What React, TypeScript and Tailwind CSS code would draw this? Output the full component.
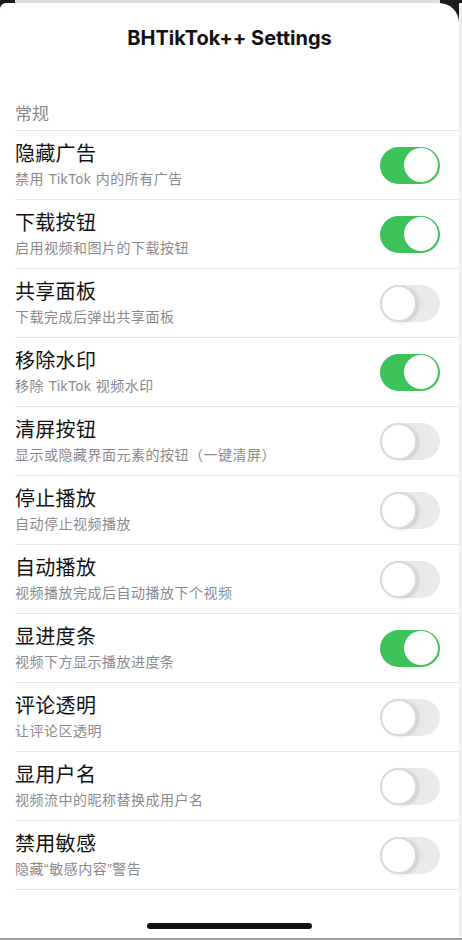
import React from 'react';

const settings = [
  { title: '隐藏广告', desc: '禁用 TikTok 内的所有广告', on: true },
  { title: '下载按钮', desc: '启用视频和图片的下载按钮', on: true },
  { title: '共享面板', desc: '下载完成后弹出共享面板', on: false },
  { title: '移除水印', desc: '移除 TikTok 视频水印', on: true },
  { title: '清屏按钮', desc: '显示或隐藏界面元素的按钮（一键清屏）', on: false },
  { title: '停止播放', desc: '自动停止视频播放', on: false },
  { title: '自动播放', desc: '视频播放完成后自动播放下个视频', on: false },
  { title: '显进度条', desc: '视频下方显示播放进度条', on: true },
  { title: '评论透明', desc: '让评论区透明', on: false },
  { title: '显用户名', desc: '视频流中的昵称替换成用户名', on: false },
  { title: '禁用敏感', desc: '隐藏“敏感内容”警告', on: false },
];

function Toggle({ on }: { on: boolean }) {
  if (on) {
    return (
      <div className="w-[60px] h-[37px] rounded-full bg-[#3ec35b] flex items-center justify-end pr-[2px]">
        <div className="w-[34px] h-[34px] rounded-full bg-white" />
      </div>
    );
  }
  return (
    <div className="w-[60px] h-[37px] rounded-full bg-[#e9e9ea] flex items-center justify-start">
      <div className="w-[37px] h-[37px] rounded-full bg-white border-2 border-[#dadada] shadow-[2px_1px_3px_rgba(0,0,0,0.12)]" />
    </div>
  );
}

export default function App() {
  return (
    <div
      className="w-[462px] h-[940px] bg-[#1c1c1c] flex flex-col overflow-hidden"
      style={{ fontFamily: '"Liberation Sans", "Noto Sans CJK SC", sans-serif' }}
    >
      <div className="h-[3px] mx-[15px] mr-[22px] bg-[#dedede] shrink-0" />
      <div className="flex-1 flex">
        <div className="flex-1 bg-white rounded-tl-[6px] rounded-tr-[20px] flex flex-col">
          <h1
            className="text-center text-[20px] font-bold text-[#111] pt-[25px] leading-[20px]"
            style={{ fontFamily: 'Inter, "Liberation Sans", sans-serif' }}
          >
            BHTikTok++ Settings
          </h1>
          <div className="pl-[15px] mt-[55px]">
            <div className="text-[17px] text-[#8a8a8e] leading-[20px] pb-[5px] pt-[2px]">常规</div>
            <div className="border-t border-[#e6e6e8]">
              {settings.map((s) => (
                <div
                  key={s.title}
                  className="h-[69px] border-b border-[#e6e6e8] flex items-center pr-[19px]"
                >
                  <div className="flex-1 flex flex-col">
                    <div className="text-[20px] text-[#111] leading-[24px] tracking-[0.3px]">{s.title}</div>
                    <div className="text-[14px] text-[#8a8a8e] leading-[18px] mt-[4px] tracking-[0.5px]">
                      {s.desc}
                    </div>
                  </div>
                  <Toggle on={s.on} />
                </div>
              ))}
            </div>
          </div>
          <div className="flex-1 flex items-end justify-center pb-[9px]">
            <div className="w-[165px] h-[6px] rounded-full bg-[#111]" />
          </div>
        </div>
        <div className="w-[3px] bg-[#efefef]" />
      </div>
      <div className="h-[2px] bg-[#9a9a9a] shrink-0" />
    </div>
  );
}
